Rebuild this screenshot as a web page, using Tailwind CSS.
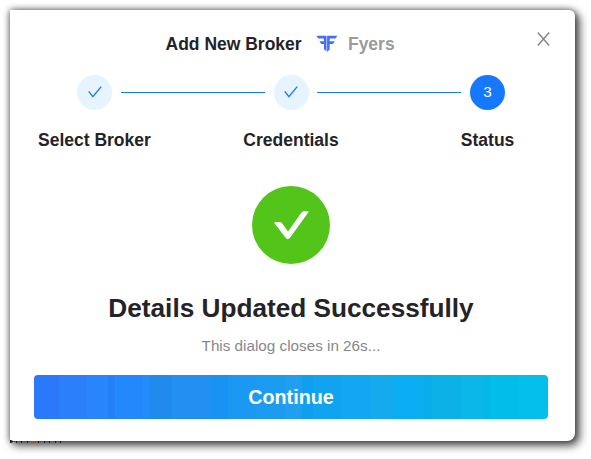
<!DOCTYPE html>
<html lang="en">
<head>
<meta charset="utf-8">
<title>Add New Broker</title>
<script src="https://cdn.jsdelivr.net/npm/@tailwindcss/browser@4"></script>
</head>
<body class="h-[459px] w-[591px] overflow-hidden bg-white pt-[10px] pl-[10px] font-['Liberation_Sans',sans-serif] text-[#242327]">
<main class="relative flex h-[431px] w-[565px] flex-col rounded-tr-[6px] rounded-br-[8px] bg-white pr-[27px] pl-[24px] shadow-[4px_4px_8px_1px_rgba(0,0,0,0.6),0_0_7px_0_rgba(0,0,0,0.6)]">
  <button class="absolute top-[22px] right-[25px] text-[#858585]" aria-label="Close">
    <svg class="block h-[14px] w-[13px]" viewBox="0 0 13 14" fill="none" stroke="currentColor" stroke-width="1.4"><path d="M.8.5 12.2 13.5M12.2.5.8 13.5"/></svg>
  </button>
  <header class="flex h-[65px] items-center pt-[3px] pl-[131.5px] text-[17.5px] font-bold whitespace-nowrap">
    <span>Add New Broker</span>
    <svg class="ml-[14px] h-[18px] w-[22px] shrink-0" viewBox="0 0 22 18" fill="#486df5"><path d="M.3.700h10.200v15.500L8 14.200V9.100H5.200L3.400 6.300H8V5L7.500 3.500H2.300zM21.500.700H11.100v16.200l2.500-2.500V9.100h3.300l1.900-2.800h-5.200V5l.5-1.500h5.400z"/></svg>
    <span class="ml-[10.3px] text-[#9b9b9b]">Fyers</span>
  </header>
  <ol class="flex h-[78px] justify-between text-[17.5px] font-bold whitespace-nowrap">
    <li class="flex w-[121px] flex-col items-center">
      <span class="flex size-[35px] items-center justify-center rounded-full bg-[#e6f4ff] pb-[2px] pl-px"><svg class="h-[12px] w-[14px]" viewBox="0 0 14 12" fill="none" stroke="#1677ff" stroke-width="1.35"><path d="M.7 5.3 4.9 10.600 13.200.6"/></svg></span>
      <span class="mt-[20px] leading-5">Select Broker</span>
    </li>
    <li class="-mx-[34px] mt-[17px] h-px w-[144px] bg-[#1677ff]"></li>
    <li class="flex w-[121px] flex-col items-center">
      <span class="flex size-[35px] items-center justify-center rounded-full bg-[#e6f4ff] pb-[2px]"><svg class="h-[12px] w-[14px]" viewBox="0 0 14 12" fill="none" stroke="#1677ff" stroke-width="1.35"><path d="M.7 5.3 4.900 10.600 13.200.6"/></svg></span>
      <span class="mt-[20px] leading-5">Credentials</span>
    </li>
    <li class="-mx-[34px] mt-[17px] h-px w-[144px] bg-[#1677ff]"></li>
    <li class="flex w-[121px] flex-col items-center">
      <span class="flex size-[35px] items-center justify-center rounded-full bg-[#1677ff] text-[15.3px] font-normal text-white">3</span>
      <span class="mt-[20px] leading-5">Status</span>
    </li>
  </ol>
  <section class="mt-[33px] flex flex-col items-center">
    <svg class="size-[78px]" viewBox="0 0 78 78"><circle cx="39" cy="39" r="39" fill="#52c41a"/><path d="M23 36h4.600q1.400 0 2.300 1.100l6.100 8.400L49.300 26.800q1-1.500 2.700-1.500h3.700q1.400 0 .5 1.300L38 51.800q-2.200 2.900-4.400 0L22.500 37.300q-.7-1.300.5-1.300z" fill="#fff"/></svg>
    <h1 class="mt-[26px] text-[26.2px] leading-9 font-bold whitespace-nowrap">Details Updated Successfully</h1>
    <p class="mt-[10px] text-[15.25px] leading-5 text-[#888888]">This dialog closes in 26s...</p>
  </section>
  <button class="mt-[19px] h-[44px] w-[514px] shrink-0 rounded-[4px] bg-[linear-gradient(90deg,#2979fa_0_25px,#2980fa_25px_53px,#2985fb_53px_74px,#2380f6_74px_81px,#2288fb_81px_109px,#258cfb_109px_115px,#208bed_115px_138px,#228ff2_138px_176px,#1892f3_176px_194px,#1b98f1_194px_222px,#1b9cf0_222px_251px,#209fee_251px_268px,#109eee_268px_279px,#12a3f0_279px_308px,#12a7f0_308px_337px,#13abed_337px_359px,#0aacf2_359px_383px,#0aadeb_383px_398px,#0bb1e7_398px_428px,#0bb6e9_428px_450px,#03b8e6_450px_456px,#02bce9_456px_484px,#02bfeb_484px)] pt-[2px] text-[19.7px] font-bold text-white">Continue</button>
  <svg class="absolute top-[430px] left-0 h-[3px] w-[52px]" viewBox="0 0 52 3" aria-hidden="true"><path d="M0 0h1v1h51v1H0z" fill="#555"/><path d="M0 0h1l2 1v1l-2 1H0zM6 1h1v2H6zM11 1h1v2h-1zM17 1h1v2h-1zM28 1h1v2h-1zM34 1h1v2h-1zM39 1h1v2h-1zM45 1h1v2h-1zM50 1h1v2h-1z" fill="#171c35"/><path d="M21 1h4v2h-4z" fill="#9b5a1c"/></svg>
</main>
</body>
</html>
